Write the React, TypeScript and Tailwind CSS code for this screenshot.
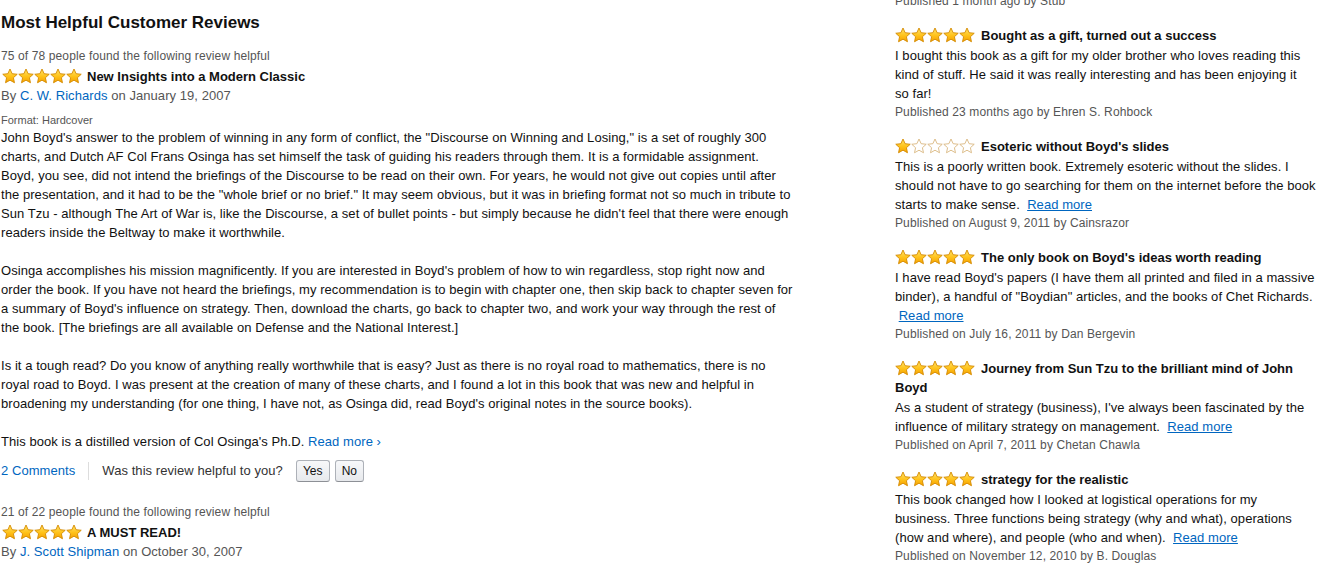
import React from "react";

interface StarsProps {
	rating: number;
}

const STAR =
	"M8 1 L10.12 5.69 L15.23 6.25 L11.42 9.71 L12.47 14.75 L8 12.2 L3.53 14.75 L4.58 9.71 L0.77 6.25 L5.88 5.69 Z";

function Stars({ rating }: StarsProps) {
	return (
		<svg width="80" height="16" viewBox="0 0 80 16" className="inline-block align-[-3px]">
			<defs>
				<linearGradient id="gold" x1="0" y1="0" x2="0" y2="1">
					<stop offset="0" stopColor="#ffe36a" />
					<stop offset="0.55" stopColor="#ffc21a" />
					<stop offset="1" stopColor="#f5a000" />
				</linearGradient>
			</defs>
			{[0, 1, 2, 3, 4].map((i) => (
				<path
					key={i}
					d={STAR}
					transform={`translate(${i * 16} 0)`}
					fill={i < rating ? "url(#gold)" : "#ffffff"}
					stroke={i < rating ? "#d48a00" : "#d9b77f"}
					strokeWidth="0.9"
					strokeLinejoin="round"
				/>
			))}
		</svg>
	);
}

interface SideReviewProps {
	title: string[];
	body: string[];
	published: string;
	rating: number;
	readMore?: boolean;
}

function SideReview({ title, body, published, rating, readMore = true }: SideReviewProps) {
	const last = body.length - 1;
	return (
		<div className="mb-[15px]">
			<div className="text-[13px] leading-[19px] font-bold text-[#111] mb-[1px] whitespace-nowrap">
				{title.map((t, i) => (
					<div key={i}>
						{i === 0 && <Stars rating={rating} />}
						<span className={i === 0 ? "ml-[6px]" : ""}>{t}</span>
					</div>
				))}
			</div>
			<div className="text-[13px] leading-[19px] tracking-[0.06px] text-[#111] whitespace-nowrap">
				{body.map((line, i) => (
					<div key={i}>
						{line}
						{i === last && readMore && (
							<>
								{line ? "\u00a0\u00a0" : "\u00a0"}
								<a href="#" className="text-[#0066c0] underline">
									Read more
								</a>
							</>
						)}
					</div>
				))}
			</div>
			<div className="text-[12px] leading-[19px] tracking-[0.12px] text-[#555]">{published}</div>
		</div>
	);
}

const sideReviews: SideReviewProps[] = [
	{
		title: ["Bought as a gift, turned out a success"],
		body: [
			"I bought this book as a gift for my older brother who loves reading this",
			"kind of stuff. He said it was really interesting and has been enjoying it",
			"so far!",
		],
		published: "Published 23 months ago by Ehren S. Rohbock",
		rating: 5,
		readMore: false,
	},
	{
		title: ["Esoteric without Boyd's slides"],
		body: [
			"This is a poorly written book. Extremely esoteric without the slides. I",
			"should not have to go searching for them on the internet before the book",
			"starts to make sense.",
		],
		published: "Published on August 9, 2011 by Cainsrazor",
		rating: 1,
	},
	{
		title: ["The only book on Boyd's ideas worth reading"],
		body: [
			"I have read Boyd's papers (I have them all printed and filed in a massive",
			'binder), a handful of "Boydian" articles, and the books of Chet Richards.',
			"",
		],
		published: "Published on July 16, 2011 by Dan Bergevin",
		rating: 5,
	},
	{
		title: ["Journey from Sun Tzu to the brilliant mind of John", "Boyd"],
		body: [
			"As a student of strategy (business), I've always been fascinated by the",
			"influence of military strategy on management.",
		],
		published: "Published on April 7, 2011 by Chetan Chawla",
		rating: 5,
	},
	{
		title: ["strategy for the realistic"],
		body: [
			"This book changed how I looked at logistical operations for my",
			"business. Three functions being strategy (why and what), operations",
			"(how and where), and people (who and when).",
		],
		published: "Published on November 12, 2010 by B. Douglas",
		rating: 5,
	},
];

const paragraphs: string[][] = [
	[
		'John Boyd\'s answer to the problem of winning in any form of conflict, the "Discourse on Winning and Losing," is a set of roughly 300',
		"charts, and Dutch AF Col Frans Osinga has set himself the task of guiding his readers through them. It is a formidable assignment.",
		"Boyd, you see, did not intend the briefings of the Discourse to be read on their own. For years, he would not give out copies until after",
		'the presentation, and it had to be the "whole brief or no brief." It may seem obvious, but it was in briefing format not so much in tribute to',
		"Sun Tzu - although The Art of War is, like the Discourse, a set of bullet points - but simply because he didn't feel that there were enough",
		"readers inside the Beltway to make it worthwhile.",
	],
	[
		"Osinga accomplishes his mission magnificently. If you are interested in Boyd's problem of how to win regardless, stop right now and",
		"order the book. If you have not heard the briefings, my recommendation is to begin with chapter one, then skip back to chapter seven for",
		"a summary of Boyd's influence on strategy. Then, download the charts, go back to chapter two, and work your way through the rest of",
		"the book. [The briefings are all available on Defense and the National Interest.]",
	],
	[
		"Is it a tough read? Do you know of anything really worthwhile that is easy? Just as there is no royal road to mathematics, there is no",
		"royal road to Boyd. I was present at the creation of many of these charts, and I found a lot in this book that was new and helpful in",
		"broadening my understanding (for one thing, I have not, as Osinga did, read Boyd's original notes in the source books).",
	],
];

function ReviewHeader({ helpful, title, author, date }: { helpful: string; title: string; author: string; date: string }) {
	return (
		<>
			<div className="text-[12px] leading-[17px] tracking-[0.12px] text-[#555]">{helpful}</div>
			<div className="mt-[2px] text-[13px] leading-[19px] font-bold text-[#111]">
				<span className="ml-[1px]">
					<Stars rating={5} />
				</span>
				<span className="ml-[5px]">{title}</span>
			</div>
			<div className="text-[13px] leading-[19px] tracking-[0.06px] text-[#555]">
				By{" "}
				<a href="#" className="text-[#0066c0]">
					{author}
				</a>{" "}
				on {date}
			</div>
		</>
	);
}

function VoteButton({ label }: { label: string }) {
	return (
		<button className="h-[22px] px-[6px] rounded-[3px] border border-[#adb1b8] border-b-[#8d9096] bg-gradient-to-b from-[#f7f8fa] to-[#e7e9ec] text-[12px] text-[#111] leading-[20px]">
			{label}
		</button>
	);
}

export default function App() {
	return (
		<div className="w-[1319px] h-[565px] overflow-hidden bg-white flex font-['Liberation_Sans',Arial,sans-serif]">
			{/* Columna principal */}
			<div className="w-[795px] shrink-0 pl-[1px]">
				<h2 className="mt-[11px] text-[17px] leading-[24px] font-bold text-[#111]">
					Most Helpful Customer Reviews
				</h2>

				<div className="mt-[13px]">
					<ReviewHeader
						helpful="75 of 78 people found the following review helpful"
						title="New Insights into a Modern Classic"
						author="C. W. Richards"
						date="January 19, 2007"
					/>
					<div className="mt-[8px] text-[11px] leading-[15px] text-[#555]">Format: Hardcover</div>
					<div className="text-[13px] leading-[19px] tracking-[0.06px] text-[#111] whitespace-nowrap space-y-[19px]">
						{paragraphs.map((p, i) => (
							<p key={i}>
								{p.map((line, j) => (
									<span key={j} className="block">
										{line}
									</span>
								))}
							</p>
						))}
						<p>
							This book is a distilled version of Col Osinga's Ph.D.{" "}
							<a href="#" className="text-[#0066c0]">
								Read more ›
							</a>
						</p>
					</div>
					<div className="mt-[9px] h-[22px] flex items-center text-[13px] tracking-[0.06px]">
						<a href="#" className="text-[#0066c0]">
							2 Comments
						</a>
						<span className="mx-[13px] h-[18px] border-l border-[#ddd]" />
						<span className="text-[#333]">Was this review helpful to you?</span>
						<div className="ml-[13px] flex gap-[5px]">
							<VoteButton label="Yes" />
							<VoteButton label="No" />
						</div>
					</div>
				</div>

				<div className="mt-[22px]">
					<ReviewHeader
						helpful="21 of 22 people found the following review helpful"
						title="A MUST READ!"
						author="J. Scott Shipman"
						date="October 30, 2007"
					/>
				</div>
			</div>

			{/* Columna lateral */}
			<div className="ml-[100px] w-[418px] shrink-0">
				<div className="-mt-[8px] mb-[15px] text-[12px] leading-[19px] tracking-[0.12px] text-[#555]">
					Published 1 month ago by Stub
				</div>
				{sideReviews.map((r) => (
					<SideReview key={r.title[0]} {...r} />
				))}
			</div>
		</div>
	);
}
